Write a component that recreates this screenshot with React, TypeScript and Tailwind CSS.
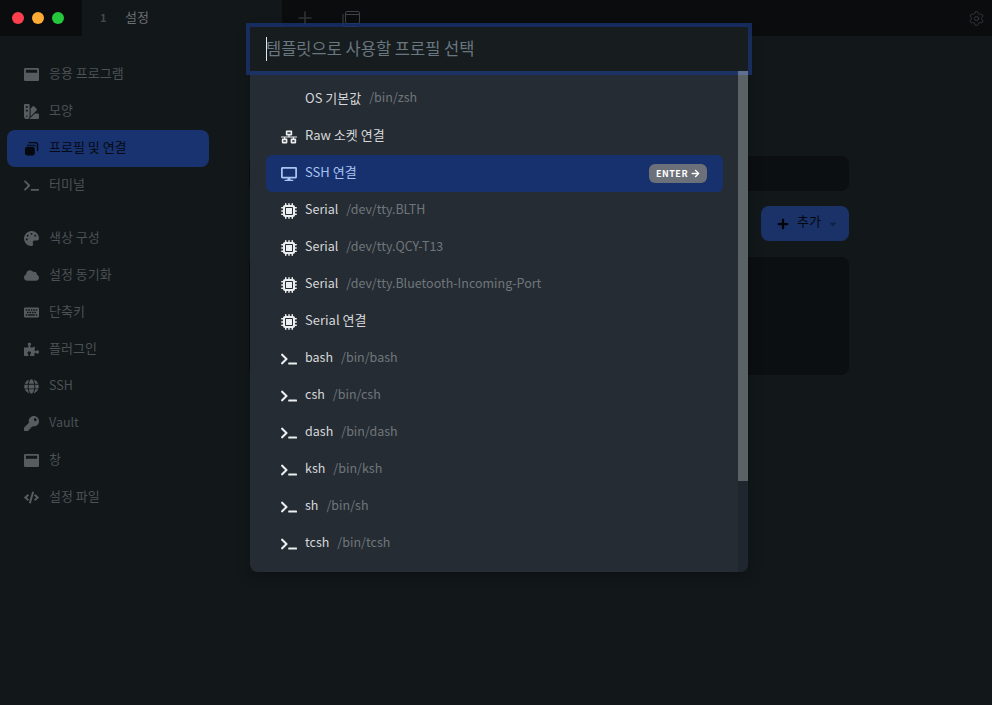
import React from 'react';
import {
  FaCloud,
  FaCode,
  FaDesktop,
  FaGlobe,
  FaKey,
  FaKeyboard,
  FaNetworkWired,
  FaPalette,
  FaPlus,
  FaPuzzlePiece,
  FaSwatchbook,
  FaTerminal,
  FaWindowMaximize,
  FaCaretDown,
  FaArrowRight,
} from 'react-icons/fa';
import { FaMicrochip } from 'react-icons/fa6';
import { Settings } from 'lucide-react';

type IconType = React.ComponentType<{ className?: string }>;

const ProfilesIcon: IconType = ({ className }) => (
  <svg className={className} width="1em" height="1em" viewBox="0 0 16 16" fill="none">
    <path d="M5.5 1.75h6.500a2.500 2.500 0 0 1 2.500 2.500v6" stroke="currentColor" strokeWidth="1.5" strokeLinecap="round" />
    <path d="M3.5 4.5h6.500a2.500 2.500 0 0 1 2 1" stroke="currentColor" strokeWidth="1.2" strokeLinecap="round" />
    <rect x="1" y="6" width="10.5" height="9.5" rx="2.5" fill="currentColor" />
  </svg>
);

const topNav: { label: string; icon: IconType; active?: boolean }[] = [
  { label: '응용 프로그램', icon: FaWindowMaximize },
  { label: '모양', icon: FaSwatchbook },
  { label: '프로필 및 연결', icon: ProfilesIcon, active: true },
  { label: '터미널', icon: FaTerminal },
];

const bottomNav: { label: string; icon: IconType }[] = [
  { label: '색상 구성', icon: FaPalette },
  { label: '설정 동기화', icon: FaCloud },
  { label: '단축키', icon: FaKeyboard },
  { label: '플러그인', icon: FaPuzzlePiece },
  { label: 'SSH', icon: FaGlobe },
  { label: 'Vault', icon: FaKey },
  { label: '창', icon: FaWindowMaximize },
  { label: '설정 파일', icon: FaCode },
];

const profiles: { name: string; path?: string; icon?: IconType; selected?: boolean }[] = [
  { name: 'OS 기본값', path: '/bin/zsh' },
  { name: 'Raw 소켓 연결', icon: FaNetworkWired },
  { name: 'SSH 연결', icon: FaDesktop, selected: true },
  { name: 'Serial', path: '/dev/tty.BLTH', icon: FaMicrochip },
  { name: 'Serial', path: '/dev/tty.QCY-T13', icon: FaMicrochip },
  { name: 'Serial', path: '/dev/tty.Bluetooth-Incoming-Port', icon: FaMicrochip },
  { name: 'Serial 연결', icon: FaMicrochip },
  { name: 'bash', path: '/bin/bash', icon: FaTerminal },
  { name: 'csh', path: '/bin/csh', icon: FaTerminal },
  { name: 'dash', path: '/bin/dash', icon: FaTerminal },
  { name: 'ksh', path: '/bin/ksh', icon: FaTerminal },
  { name: 'sh', path: '/bin/sh', icon: FaTerminal },
  { name: 'tcsh', path: '/bin/tcsh', icon: FaTerminal },
];

// latin glyphs run a little narrower than the hangul ones in the original
const textStyle = (s: string) => (/[가-힣]/.test(s) ? 'text-[13px] pb-[4px]' : 'text-[12.5px] pb-[2px]');

const NavItem: React.FC<{ label: string; icon: IconType; active?: boolean }> = ({ label, icon: Icon, active }) => (
  <div
    className={`h-[37px] mx-[7px] w-[202px] pl-[16px] flex items-center gap-[10px] rounded-lg ${
      active ? 'bg-[#18336f] text-[#060a14]' : 'text-[#4b5155]'
    }`}
  >
    <span className="w-[16px] flex justify-center shrink-0">
      <Icon className={`text-[15px] ${active ? 'text-[#05080f]' : 'text-[#565c60]'}`} />
    </span>
    <span className={textStyle(label)}>{label}</span>
  </div>
);

const ProfileRow: React.FC<{ name: string; path?: string; icon?: IconType; selected?: boolean }> = ({
  name,
  path,
  icon: Icon,
  selected,
}) => (
  <div
    className={`h-[37px] ml-[16px] mr-[25px] pl-[14px] pr-[16px] flex items-center gap-[8px] rounded-md ${
      selected ? 'bg-[#17306e] text-[#a9c3f2]' : 'text-[#d5d8da]'
    }`}
  >
    <span className="w-[17px] flex justify-center shrink-0">
      {Icon && <Icon className={`text-[16px] ${selected ? 'text-[#a9c3f2]' : 'text-[#eceeef]'}`} />}
    </span>
    <span className={textStyle(name)}>{name}</span>
    {path && <span className={`text-[12.5px] text-[#6f767b] ${name.includes('OS') ? 'pb-[4px]' : 'pb-[2px]'}`}>{path}</span>}
    {selected && (
      <span className="ml-auto h-[19px] w-[58px] flex items-center justify-center gap-[3px] rounded-md bg-[#6b7079] text-white text-[9px] font-bold tracking-[0.5px]">
        ENTER
        <FaArrowRight className="text-[9px]" />
      </span>
    )}
  </div>
);

export default function App() {
  return (
    <div
      className="relative h-[705px] w-[992px] overflow-hidden bg-[#12171a] flex flex-col"
      style={{ fontFamily: '"Noto Sans CJK KR", "Noto Sans", sans-serif' }}
    >
      {/* title bar */}
      <header className="h-[36px] shrink-0 bg-[#0a0c0e] flex items-center">
        <div className="w-[82px] pl-[12px] flex items-center gap-[8px] shrink-0">
          <span className="w-[12px] h-[12px] rounded-full bg-[#fc3f4d]" />
          <span className="w-[12px] h-[12px] rounded-full bg-[#fdab34]" />
          <span className="w-[12px] h-[12px] rounded-full bg-[#25c73d]" />
        </div>
        <div className="w-[200px] h-full bg-[#12171a] flex items-center pl-[18px] text-[#6a6f73] shrink-0">
          <span className="w-[25px] font-bold text-[#45494c] text-[11px] pb-[2px]">1</span>
          <span className="text-[13px] pb-[3px]">설정</span>
        </div>
        <svg className="ml-[16px] text-[#303437]" width="14" height="14" viewBox="0 0 14 14" stroke="currentColor" strokeWidth="1.6">
          <path d="M7 0.5v13M0.5 7h13" />
        </svg>
        <svg className="ml-[30px] mt-[1px] text-[#3d4245]" width="18" height="18" viewBox="0 0 18 18" fill="none" stroke="currentColor">
          <rect x="3.5" y="1.5" width="14" height="12" rx="1.5" />
          <path d="M3.5 4.5h14" />
          <path d="M1 4v11a1.5 1.5 0 0 0 1.5 1.5H15" />
        </svg>
        <Settings className="ml-auto mr-[7px] text-[#43474a]" size={17} strokeWidth={1} />
      </header>

      <div className="flex flex-1 min-h-0">
        {/* sidebar */}
        <aside className="w-[216px] shrink-0 pt-[20px]">
          {topNav.map((item) => (
            <NavItem key={item.label} {...item} />
          ))}
          <div className="h-[16px]" />
          {bottomNav.map((item) => (
            <NavItem key={item.label} {...item} />
          ))}
        </aside>

        {/* content behind the palette */}
        <main className="flex-1 pl-[33px] pr-[143px] pt-[120px]">
          <div className="h-[35px] rounded-lg bg-[#0c0f11]" />
          <div className="mt-[15px] flex justify-end">
            <button className="h-[35px] w-[88px] rounded-lg bg-[#1a3268] flex items-center pl-[16px] text-[#05080f]">
              <FaPlus className="text-[12px] text-[#020409]" />
              <span className="ml-[8px] text-[13px] pb-[6px]">추가</span>
              <FaCaretDown className="ml-[7px] text-[10px] text-[#111f42]" />
            </button>
          </div>
          <div className="mt-[16px] h-[118px] rounded-lg bg-[#0c0f11]" />
        </main>
      </div>

      {/* profile selector */}
      <div className="absolute left-[250px] top-[27px] w-[498px] h-[545px] z-10 shadow-[0_4px_12px_rgba(0,0,0,0.25)]">
        <div className="relative z-10 h-[44px] bg-[#171c1f] outline-4 outline-[#1a3370cc] flex items-center pl-[16px]">
          <span className="w-px h-[24px] bg-[#e6e6e6] shrink-0" />
          <span className="-ml-px text-[16.5px] text-[#687780] pb-[2px]">템플릿으로 사용할 프로필 선택</span>
        </div>
        <div className="relative h-[501px] bg-[#262c33] rounded-b-lg overflow-hidden pt-[10px]">
          {profiles.map((profile, i) => (
            <ProfileRow key={i} {...profile} />
          ))}
          <div className="absolute right-0 top-0 bottom-0 w-[10px] bg-[#20262d]">
            <div className="h-[410px] bg-[#5a6265]" />
          </div>
        </div>
        <div className="absolute right-0 top-[44px] z-20 w-[10px] h-[4px] bg-[#5f7090]" />
      </div>
    </div>
  );
}
